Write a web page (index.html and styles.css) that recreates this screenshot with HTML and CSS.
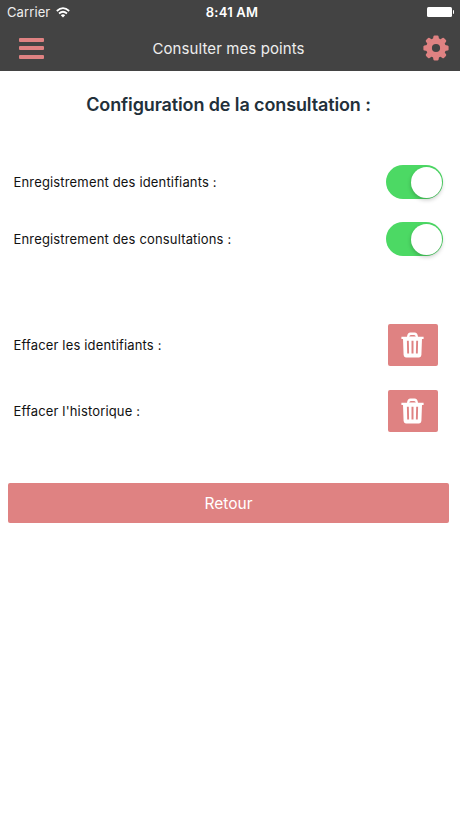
FILE: index.html
```html
<!doctype html>
<html lang="fr">
  <head>
    <meta charset="utf-8" />
    <title>Consulter mes points</title>
    <meta name="viewport" content="width=device-width, initial-scale=1.0" />
    <link rel="stylesheet" href="styles.css">
  </head>
  <body>
    <svg width="0" height="0" class="sprite">
      <symbol id="trash" viewBox="0 0 23 26">
        <path fill-rule="evenodd" d="M6 4.8Q6.6 .6 9.4 .6h4.2Q16.4 .6 17 4.8H22.6V7H.4V4.8ZM8.2 4.4h6.6Q14.4 2.9 13.2 2.9H9.8Q8.6 2.9 8.2 4.4Z" />
        <path fill-rule="evenodd" d="M2 6.5h19l-.6 16.6q-.2 2.4-2.3 2.4H4.9q-2.1 0-2.3-2.4ZM5.9 8.8l.3 12.7h1.9L7.8 8.8ZM10.5 8.8v12.7h2V8.8ZM15.2 8.8l-.3 12.7h1.9l.3-12.7Z" />
      </symbol>
    </svg>

    <header class="header">
      <div class="status-bar">
        <div class="carrier">
          <span>Carrier</span>
          <svg class="wifi" viewBox="0 0 14 11" fill="none" stroke="currentColor" stroke-width="1.7">
            <path d="M.8 4Q7-1.6 13.2 4" />
            <path d="M3 6.5Q7 3 11 6.5" />
            <path d="M4.8 8.3Q7 6.3 9.2 8.3L7 10.5Z" fill="currentColor" stroke="none" />
          </svg>
        </div>
        <span class="clock">8:41 AM</span>
        <div class="power">
          <span class="battery"></span>
          <span class="battery-tip"></span>
        </div>
      </div>
      <nav class="navbar">
        <button class="menu" aria-label="Menu">
          <span class="bar"></span>
          <span class="bar"></span>
          <span class="bar"></span>
        </button>
        <h1 class="navbar-title">Consulter mes points</h1>
        <svg class="gear" viewBox="-13 -13 26 26">
          <circle r="7" fill="none" stroke="currentColor" stroke-width="5.8" />
          <g fill="currentColor">
            <path id="teeth" d="M-3-9-2.6-11.6Q-2.4-12.6-1.4-12.6H1.4Q2.4-12.6 2.6-11.6L3-9ZM-3 9-2.6 11.6Q-2.4 12.6-1.4 12.6H1.4Q2.4 12.6 2.6 11.6L3 9Z" />
            <use href="#teeth" transform="rotate(45)" />
            <use href="#teeth" transform="rotate(90)" />
            <use href="#teeth" transform="rotate(135)" />
          </g>
        </svg>
      </nav>
    </header>

    <main class="content">
      <h2 class="title">Configuration de la consultation :</h2>

      <div class="switches">
        <label class="row">
          <span>Enregistrement des identifiants :</span>
          <span class="toggle"><span class="knob"></span></span>
        </label>
        <label class="row">
          <span>Enregistrement des consultations :</span>
          <span class="toggle"><span class="knob"></span></span>
        </label>
      </div>

      <div class="actions">
        <div class="row">
          <span>Effacer les identifiants :</span>
          <button class="btn btn-trash" aria-label="Effacer les identifiants">
            <svg class="trash"><use href="#trash" /></svg>
          </button>
        </div>
        <div class="row">
          <span>Effacer l'historique :</span>
          <button class="btn btn-trash" aria-label="Effacer l'historique">
            <svg class="trash"><use href="#trash" /></svg>
          </button>
        </div>
      </div>

      <button class="btn btn-back">Retour</button>
    </main>
  </body>
</html>
```
FILE: styles.css
```css
:root {
  --color-bar: #434343;
  --color-accent: #df8282;
  --color-on: #4cd964;
  --color-title: #22303a;
}
* {
  margin: 0;
  padding: 0;
  box-sizing: border-box;
}
body {
  min-height: 100vh;
  background: #fff;
  color: #111;
  font-family: Inter, "Liberation Sans", sans-serif;
  font-size: 13px;
}
button {
  border: 0;
  background: none;
  font-family: inherit;
}
svg {
  display: block;
}
.sprite {
  display: none;
}
.header {
  height: 71px;
  background: var(--color-bar);
  color: #eee;
}
.status-bar {
  height: 24px;
  display: grid;
  grid-template-columns: 1fr auto 1fr;
  align-items: center;
  padding: 0 6px 0 7px;
}
.carrier {
  display: flex;
  align-items: center;
  gap: 6px;
  letter-spacing: 0.1px;
}
.wifi {
  width: 14px;
  height: 11px;
  color: #fff;
}
.clock {
  margin-left: 3px;
  color: #fff;
  font-weight: 600;
  letter-spacing: 0.2px;
}
.power {
  display: flex;
  align-items: center;
  justify-content: flex-end;
  gap: 1px;
}
.battery {
  width: 25px;
  height: 10.5px;
  border-radius: 1.5px;
  background: #fff;
}
.battery-tip {
  width: 1.5px;
  height: 4px;
  border-radius: 0 2px 2px 0;
  background: #fff;
}
.navbar {
  height: 47px;
  display: grid;
  grid-template-columns: 25px 1fr 26px;
  align-items: center;
  padding: 1px 11px 0 19px;
}
.menu {
  display: flex;
  flex-direction: column;
  gap: 4.5px;
}
.bar {
  height: 4px;
  border-radius: 1px;
  background: var(--color-accent);
}
.navbar-title {
  padding-right: 10px;
  font-size: 15px;
  font-weight: 400;
  letter-spacing: 0.1px;
  text-align: center;
}
.gear {
  width: 26px;
  height: 26px;
  color: var(--color-accent);
}
.content {
  padding: 23px 11px 0 8px;
}
.title {
  color: var(--color-title);
  font-size: 18px;
  font-weight: 600;
  letter-spacing: -0.12px;
  line-height: 22px;
  text-align: center;
}
.row {
  display: flex;
  align-items: center;
  justify-content: space-between;
  padding-left: 5.5px;
  letter-spacing: 0.16px;
}
.switches {
  display: grid;
  gap: 23px;
  margin-top: 49px;
  padding-right: 6px;
}
.toggle {
  width: 57px;
  height: 34px;
  display: flex;
  justify-content: flex-end;
  padding: 1.5px;
  border-radius: 17px;
  background: var(--color-on);
}
.knob {
  width: 31px;
  height: 31px;
  border-radius: 50%;
  background: #fff;
  box-shadow: 0 2px 4px rgba(0, 0, 0, 0.22);
}
.actions {
  display: grid;
  gap: 24px;
  margin-top: 68px;
  padding-right: 11.5px;
}
.btn {
  border-radius: 2px;
  background: var(--color-accent);
  color: #fff;
}
.btn-trash {
  width: 50px;
  height: 42px;
  display: flex;
  align-items: center;
  justify-content: center;
}
.trash {
  width: 23px;
  height: 26px;
  fill: currentColor;
}
.btn-back {
  width: 100%;
  height: 40px;
  margin-top: 51px;
  font-size: 15.5px;
}
```
